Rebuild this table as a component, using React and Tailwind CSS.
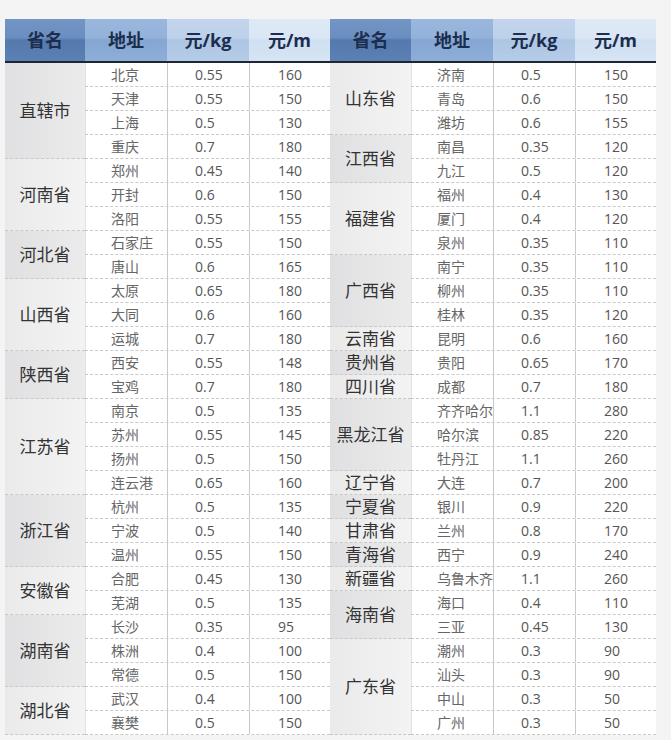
import React from 'react';

const left = [
  ['直辖市', [['北京', '0.55', '160'], ['天津', '0.55', '150'], ['上海', '0.5', '130'], ['重庆', '0.7', '180']]],
  ['河南省', [['郑州', '0.45', '140'], ['开封', '0.6', '150'], ['洛阳', '0.55', '155']]],
  ['河北省', [['石家庄', '0.55', '150'], ['唐山', '0.6', '165']]],
  ['山西省', [['太原', '0.65', '180'], ['大同', '0.6', '160'], ['运城', '0.7', '180']]],
  ['陕西省', [['西安', '0.55', '148'], ['宝鸡', '0.7', '180']]],
  ['江苏省', [['南京', '0.5', '135'], ['苏州', '0.55', '145'], ['扬州', '0.5', '150'], ['连云港', '0.65', '160']]],
  ['浙江省', [['杭州', '0.5', '135'], ['宁波', '0.5', '140'], ['温州', '0.55', '150']]],
  ['安徽省', [['合肥', '0.45', '130'], ['芜湖', '0.5', '135']]],
  ['湖南省', [['长沙', '0.35', '95'], ['株洲', '0.4', '100'], ['常德', '0.5', '150']]],
  ['湖北省', [['武汉', '0.4', '100'], ['襄樊', '0.5', '150']]],
];

const right = [
  ['山东省', [['济南', '0.5', '150'], ['青岛', '0.6', '150'], ['潍坊', '0.6', '155']]],
  ['江西省', [['南昌', '0.35', '120'], ['九江', '0.5', '120']]],
  ['福建省', [['福州', '0.4', '130'], ['厦门', '0.4', '120'], ['泉州', '0.35', '110']]],
  ['广西省', [['南宁', '0.35', '110'], ['柳州', '0.35', '110'], ['桂林', '0.35', '120']]],
  ['云南省', [['昆明', '0.6', '160']]],
  ['贵州省', [['贵阳', '0.65', '170']]],
  ['四川省', [['成都', '0.7', '180']]],
  ['黑龙江省', [['齐齐哈尔', '1.1', '280'], ['哈尔滨', '0.85', '220'], ['牡丹江', '1.1', '260']]],
  ['辽宁省', [['大连', '0.7', '200']]],
  ['宁夏省', [['银川', '0.9', '220']]],
  ['甘肃省', [['兰州', '0.8', '170']]],
  ['青海省', [['西宁', '0.9', '240']]],
  ['新疆省', [['乌鲁木齐', '1.1', '260']]],
  ['海南省', [['海口', '0.4', '110'], ['三亚', '0.45', '130']]],
  ['广东省', [['潮州', '0.3', '90'], ['汕头', '0.3', '90'], ['中山', '0.3', '50'], ['广州', '0.3', '50']]],
];

function Header({ pw }) {
  return (
    <div className="flex h-[44px] border-b-2 border-[#1e2633] text-[18px] font-bold leading-none text-[#1c2d4d]">
      <div className={`${pw} flex items-center justify-center bg-[linear-gradient(180deg,#7295c4_0%,#6a8ec0_45%,#5479ad_50%,#5a80b4_100%)]`}>省名</div>
      <div className="w-[82px] flex items-center justify-center bg-[linear-gradient(180deg,#9ab8dd_0%,#93b2da_45%,#84a6d2_50%,#8eaed7_100%)]">地址</div>
      <div className="w-[82px] flex items-center justify-center bg-[linear-gradient(180deg,#c2d5ec_0%,#bdd1ea_45%,#adc6e4_50%,#b5cce7_100%)]">元/kg</div>
      <div className="w-[81px] flex items-center justify-center bg-[linear-gradient(180deg,#dfe9f6_0%,#dbe7f5_45%,#d0e0f2_50%,#d6e4f3_100%)]">元/m</div>
    </div>
  );
}

function Half({ groups, pw, startDark }) {
  return (
    <div className="flex flex-col">
      <Header pw={pw} />
      {groups.map(([prov, rows], gi) => {
        const dark = (gi % 2 === 0) === startDark;
        return (
          <div key={prov} className="flex">
            <div
              className={`${pw} flex items-center justify-center text-[17px] leading-none text-[#333] border-b border-dashed border-[#c9c9c9] ${
                dark ? 'bg-[linear-gradient(90deg,#e0e0e2,#ebebec)]' : 'bg-[linear-gradient(90deg,#eaeaeb,#f3f3f3)]'
              }`}
            >
              {prov}
            </div>
            <div className="flex flex-col bg-white">
              {rows.map((r) => (
                <div key={r[0]} className="flex h-[24px] text-[14px] leading-none text-[#555] border-b border-dashed border-[#c9c9c9]">
                  <div className="w-[82px] pl-[25px] flex items-center border-l border-[#e2e2e2] text-[#666]">{r[0]}</div>
                  <div className="w-[82px] pl-[27px] flex items-center border-l border-[#c8c8c8]">{r[1]}</div>
                  <div className="w-[81px] pl-[28px] flex items-center border-l border-[#c8c8c8]">{r[2]}</div>
                </div>
              ))}
            </div>
          </div>
        );
      })}
    </div>
  );
}

export default function App() {
  return (
    <div
      className="w-[671px] h-[740px] bg-[#f4f4f4] pt-[19px] pl-[5px] overflow-hidden"
      style={{ fontFamily: '"Open Sans", "Noto Sans CJK SC", sans-serif' }}
    >
      <div className="flex w-[650px] bg-white">
        <Half groups={left} pw="w-[80px]" startDark={true} />
        <Half groups={right} pw="w-[81px]" startDark={false} />
      </div>
    </div>
  );
}
